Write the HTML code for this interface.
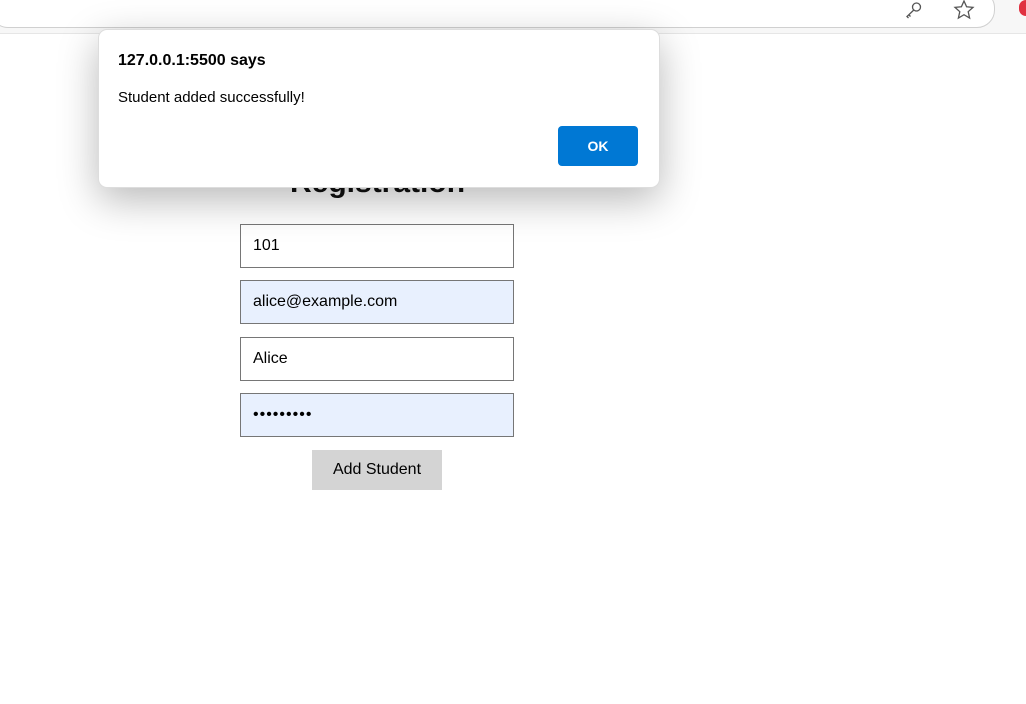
<!DOCTYPE html>
<html><head><style>
body{margin:0;width:1026px;height:704px;background:#fff;position:relative;overflow:hidden;font-family:"Liberation Sans",Arial,sans-serif}
.top{position:absolute;left:0;top:0;width:1026px;height:33px;background:#f7f7f7;border-bottom:1px solid #e6e6e6}
.addr{position:absolute;left:-10px;top:-10px;width:1003px;height:36px;background:#fff;border:1px solid #d0d0d0;border-radius:18px}
.h{position:absolute;left:290px;top:166px;font-size:30px;font-weight:bold;color:#111}
.in{position:absolute;left:240px;width:274px;height:44px;border:1px solid #767676;box-sizing:border-box;font-size:16px;padding-left:12px;line-height:42px;color:#000}
.btn{position:absolute;left:312px;top:450px;width:130px;height:40px;background:#d4d4d4;font-size:16px;text-align:center;line-height:40px}
.dlg{position:absolute;left:98px;top:29px;width:560px;height:157px;background:#fff;border-radius:9px;border:1px solid #ddd;box-shadow:0 12px 40px rgba(0,0,0,.28)}
.t1{position:absolute;left:19px;top:22px;font-size:16px;font-weight:bold}
.t2{position:absolute;left:19px;top:59px;font-size:15px}
.ok{position:absolute;left:459px;top:96px;width:80px;height:40px;background:#0078d4;border-radius:4px;color:#fff;font-weight:bold;font-size:14px;text-align:center;line-height:40px}
</style></head><body>
<div class="top"><div class="addr"></div>
<svg style="position:absolute;left:904px;top:0" width="20" height="20" viewBox="0 0 20 20" fill="none" stroke="#555" stroke-width="1.3"><circle cx="12.5" cy="7" r="4"/><path d="M9.8 10 L3 16.5 L4.5 18 M5 15 L6.5 16.5"/></svg>
<svg style="position:absolute;left:953px;top:0" width="22" height="20" viewBox="0 0 22 20" fill="none" stroke="#555" stroke-width="1.3"><path d="M11 1 L13.6 6.8 L20 7.4 L15.2 11.7 L16.6 18 L11 14.7 L5.4 18 L6.8 11.7 L2 7.4 L8.4 6.8 Z"/></svg>
<div style="position:absolute;left:1019px;top:0;width:14px;height:16px;border-radius:7px;background:#e03040"></div>
</div>
<div class="h">Registration</div>
<div class="in" style="top:224px;background:#fff">101</div>
<div class="in" style="top:280px;background:#e8f0fe">alice@example.com</div>
<div class="in" style="top:337px;background:#fff">Alice</div>
<div class="in" style="top:393px;background:#e8f0fe;letter-spacing:1px">•••••••••</div>
<div class="btn">Add Student</div>
<div class="dlg"><div class="t1">127.0.0.1:5500 says</div><div class="t2">Student added successfully!</div><div class="ok">OK</div></div>
</body></html>
